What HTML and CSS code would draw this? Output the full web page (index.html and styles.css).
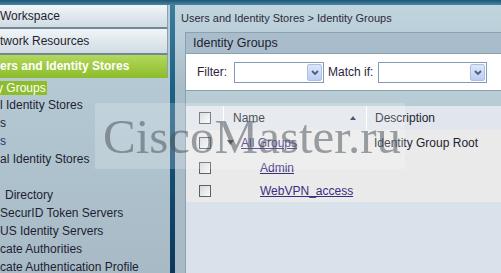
FILE: index.html
```html
<!DOCTYPE html>
<html lang="en">
<head>
  <meta charset="UTF-8" />
  <meta name="viewport" content="width=device-width, initial-scale=1.0" />
  <title>Identity Groups</title>
  <link rel="stylesheet" href="styles.css">
</head>
<body>
  <div class="topbar"></div>

  <div class="layout">
    <aside class="sidebar">
      <div class="drawer first">Workspace</div>
      <div class="drawer second">twork Resources</div>
      <div class="drawer active">ers and Identity Stores</div>
      <ul class="tree">
        <li><span class="selected">y Groups</span></li>
        <li>l Identity Stores</li>
        <li>s</li>
        <li class="blue">s</li>
        <li>al Identity Stores</li>
        <li>&nbsp;</li>
        <li class="indent">Directory</li>
        <li>SecurID Token Servers</li>
        <li>US Identity Servers</li>
        <li>cate Authorities</li>
        <li>cate Authentication Profile</li>
      </ul>
    </aside>

    <div class="splitter"></div>

    <main class="main">
      <div class="crumbs">Users and Identity Stores &gt; Identity Groups</div>

      <section class="panel">
        <div class="panel-head">Identity Groups</div>

        <div class="filter">
          <label>Filter:</label>
          <div class="select filter-select">
            <span class="drop"><svg width="8" height="5" viewBox="0 0 8 5"><polyline points="1,1 4,4 7,1" fill="none" stroke="#45608a" stroke-width="1.8"/></svg></span>
          </div>
          <label>Match if:</label>
          <div class="select match-select">
            <span class="drop"><svg width="8" height="5" viewBox="0 0 8 5"><polyline points="1,1 4,4 7,1" fill="none" stroke="#45608a" stroke-width="1.8"/></svg></span>
          </div>
        </div>

        <div class="band"></div>

        <div class="grid">
          <div class="row head">
            <div class="cell check"><span class="box"></span></div>
            <div class="cell name">Name <svg width="6" height="4" viewBox="0 0 6 4"><polygon points="0,4 3,0 6,4" fill="#1f2d5c"/></svg></div>
            <div class="cell desc">Description</div>
          </div>
          <div class="row">
            <div class="cell check"><span class="box"></span></div>
            <div class="cell name root"><svg class="twisty" width="7" height="5" viewBox="0 0 7 5"><polygon points="0,0 7,0 3.5,5" fill="#3a3a3a"/></svg><a href="#">All Groups</a></div>
            <div class="cell desc">Identity Group Root</div>
          </div>
          <div class="row">
            <div class="cell check"><span class="box"></span></div>
            <div class="cell name child"><a href="#">Admin</a></div>
            <div class="cell desc"></div>
          </div>
          <div class="row last">
            <div class="cell check"><span class="box"></span></div>
            <div class="cell name child"><a href="#">WebVPN_access</a></div>
            <div class="cell desc"></div>
          </div>
        </div>
      </section>
    </main>
  </div>

  <div class="watermark">CiscoMaster.ru</div>
</body>
</html>
```

FILE: styles.css
```css
:root {
  --line: #8aa1af;
  --green: #8dbd2b;
  --link: #3b2e80;
  --text: #1e1e30;
}
* {
  box-sizing: border-box;
}
body {
  margin: 0;
  width: 501px;
  height: 273px;
  overflow: hidden;
  position: relative;
  font-family: "Liberation Sans", Arial, sans-serif;
  font-size: 12px;
  color: var(--text);
  background: #a9bcc8;
}
.topbar {
  height: 5px;
  background: linear-gradient(#1c5576, #4a86a2);
}
.layout {
  display: flex;
  height: 268px;
}

/* left navigation */
.sidebar {
  width: 170px;
  flex: none;
  overflow: hidden;
  background: linear-gradient(#bacfda, #a7bac6);
}
.drawer {
  white-space: nowrap;
  margin-right: 2px;
  border-right: 1px solid #8aa0ae;
  border-bottom: 2px solid #6f8898;
  background: linear-gradient(#f1f5f8, #d0dbe2);
}
.drawer.first {
  height: 24px;
  line-height: 22px;
}
.drawer.second {
  height: 26px;
  line-height: 24px;
}
.drawer.active {
  height: 23px;
  line-height: 23px;
  border-bottom: none;
  color: #fff;
  font-weight: bold;
  background: linear-gradient(#b3d85c, #8cbc2a);
}
.tree {
  list-style: none;
  margin: 0;
  padding: 0;
  line-height: 18px;
  white-space: nowrap;
}
.tree .blue {
  color: #22337a;
}
.tree .indent {
  padding-left: 5px;
}
.selected {
  display: inline-block;
  line-height: 14px;
  margin-left: -3px;
  padding-right: 1px;
  vertical-align: middle;
  color: #fff;
  background: var(--green);
}

.splitter {
  width: 5px;
  flex: none;
  background: linear-gradient(#3d7e9d, #1c6184 30%, #0c375a);
}

/* content */
.main {
  flex: 1;
  min-width: 0;
  overflow: hidden;
  background: linear-gradient(#c1d5df 0, #b8ccd7 40px, #a9bdc9 80px, #a8bac6 100%);
}
.crumbs {
  height: 27px;
  line-height: 27px;
  padding-left: 6px;
  font-size: 11px;
  color: #2a2a3a;
  white-space: nowrap;
}
.panel {
  margin-left: 10px;
  margin-right: -20px;
  height: 241px;
  background: #d9e2ea;
  border-left: 1px solid var(--line);
  border-top: 1px solid var(--line);
}
.panel-head {
  height: 21px;
  line-height: 20px;
  padding-left: 7px;
  font-size: 12.5px;
  background: #a8bccb;
  border-bottom: 1px solid var(--line);
}
.filter {
  height: 37px;
  display: flex;
  align-items: center;
  padding-left: 11px;
  background: #fff;
  border-bottom: 1px solid var(--line);
  color: #2d1f3d;
}
.select {
  height: 21px;
  display: flex;
  justify-content: flex-end;
  padding: 1px;
  border: 1px solid #7f9db9;
  background: #fff;
}
.filter-select {
  width: 90px;
  margin: 0 4px 0 7px;
}
.match-select {
  width: 109px;
  margin-left: 5px;
}
.drop {
  width: 15px;
  display: flex;
  align-items: center;
  justify-content: center;
  border: 1px solid #adc0e2;
  border-radius: 2px;
  background: linear-gradient(#dde7f8, #bccdee);
}
.band {
  height: 15px;
  background: #b8ccd6;
}

/* groups table */
.row {
  display: grid;
  grid-template-columns: 37px 143px 1fr;
  height: 25px;
  align-items: center;
  background: #eaeaea;
}
.row.head {
  height: 24px;
  background: #e1e6ed;
}
.row.last {
  height: 22px;
}
.cell {
  height: 100%;
  display: flex;
  align-items: center;
  white-space: nowrap;
}
.head .name,
.head .desc {
  border-left: 1px solid #fff;
}
.check {
  padding-left: 13px;
}
.box {
  width: 12px;
  height: 12px;
  border: 1px solid #56626c;
  background: linear-gradient(135deg, #d6d8da, #fafafa);
}
.head .name {
  justify-content: space-between;
  padding: 0 10px 0 9px;
}
.desc {
  padding-left: 8px;
}
.root {
  padding-left: 4px;
}
.twisty {
  margin-right: 7px;
}
.child {
  padding-left: 37px;
}
.cell a {
  color: var(--link);
  text-decoration: underline;
}

.watermark {
  position: absolute;
  left: 95px;
  top: 103px;
  width: 310px;
  height: 66px;
  padding-left: 8px;
  overflow: hidden;
  white-space: nowrap;
  font-family: "Liberation Serif", "Times New Roman", serif;
  font-size: 49px;
  line-height: 68px;
  color: rgba(70, 80, 90, 0.52);
  background: rgba(255, 255, 255, 0.2);
}
```
